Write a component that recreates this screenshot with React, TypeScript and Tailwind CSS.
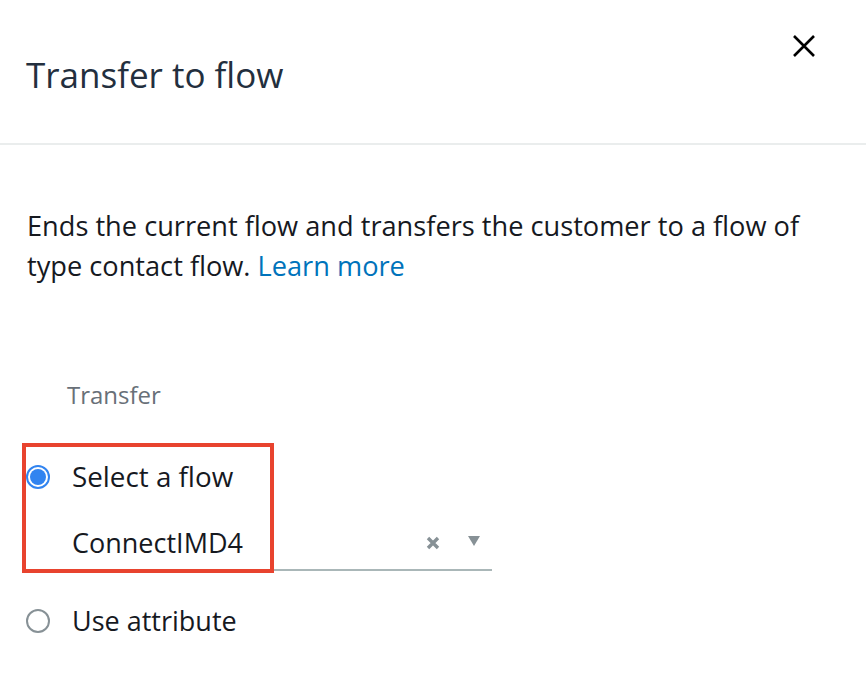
export default function App() {
    return (
        <div
            className="w-[866px] h-[678px] bg-white text-[#16191f] overflow-hidden"
            style={{ fontFamily: '"Open Sans", "Noto Sans", sans-serif' }}
        >
            <div className="h-[145px] border-b-2 border-[#eaeded] flex items-start justify-between">
                <h1 className="pl-[26px] pt-[52px] text-[35px] leading-[46px] text-[#232f3e]">
                    Transfer to flow
                </h1>
                <button className="mr-[49px] mt-[33px] w-[26px] h-[26px] flex items-center justify-center">
                    <svg width="24" height="24" viewBox="0 0 24 24">
                        <path d="M2 2 L22 22 M22 2 L2 22" stroke="#000" strokeWidth="2.6" />
                    </svg>
                </button>
            </div>

            <p className="pl-[27px] pt-[61px] text-[27.2px] leading-[40px]">
                Ends the current flow and transfers the customer to a flow of
                <br />
                type contact flow. <span className="text-[#0073bb]">Learn more</span>
            </p>

            <div className="pl-[67px] pt-[93px] text-[24px] leading-[32px] text-[#687078]">Transfer</div>

            <div className="pl-[22px] pt-[32px]">
                <div className="relative">
                    <div className="absolute left-0 top-0 w-[252px] h-[130px] border-[4px] border-[#e8432e] pointer-events-none z-10"></div>
                    <div className="flex items-center h-[66px] pl-[4px] pt-[1px]">
                        <span className="w-[24px] h-[24px] rounded-full border-2 border-[#3184f0] flex items-center justify-center">
                            <span className="w-[16px] h-[16px] rounded-full bg-[#3184f0]"></span>
                        </span>
                        <span className="ml-[22px] text-[27.8px]">Select a flow</span>
                    </div>
                    <div className="ml-[50px] w-[420px] h-[62px] border-b-2 border-[#aab7b8] flex items-center pt-[8px]">
                        <span className="text-[27px] flex-1">ConnectIMD4</span>
                        <svg width="14" height="14" viewBox="0 0 14 14" className="mr-[28px]">
                            <path d="M2 2 L12 12 M12 2 L2 12" stroke="#879196" strokeWidth="3.4" />
                        </svg>
                        <svg width="12" height="10" viewBox="0 0 12 10" className="mr-[12px] mb-[4px]">
                            <path d="M0 0 L12 0 L6 10 Z" fill="#879196" />
                        </svg>
                    </div>
                </div>
                <div className="flex items-center h-[60px] pl-[4px] mt-[20px]">
                    <span className="w-[24px] h-[24px] rounded-full border-2 border-[#879196]"></span>
                    <span className="ml-[22px] text-[27px]">Use attribute</span>
                </div>
            </div>
        </div>
    );
}
